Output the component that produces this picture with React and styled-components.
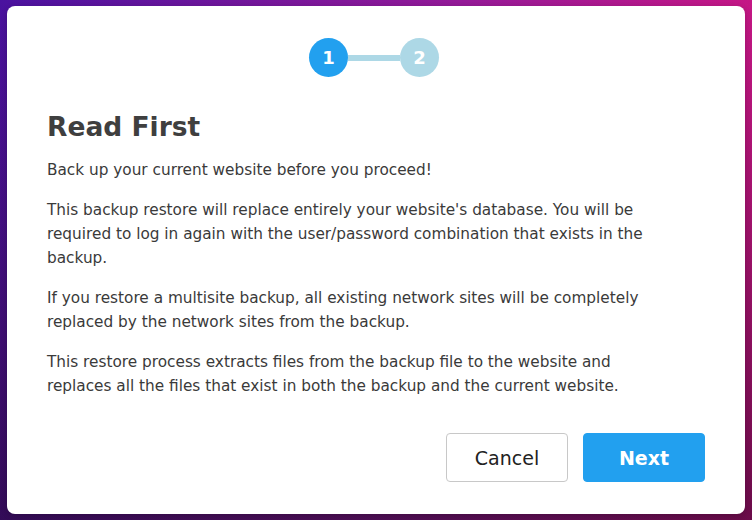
import styled, { createGlobalStyle } from 'styled-components'

const GlobalStyle = createGlobalStyle`
  html, body {
    margin: 0;
    padding: 0;
    height: 100%;
  }
  body {
    font-family: "DejaVu Sans", Verdana, sans-serif;
    background: #4a129f;
  }
  #root {
    height: 100%;
  }
`

const Backdrop = styled.div`
  width: 752px;
  height: 520px;
  box-sizing: border-box;
  padding: 6px 7px 6px 7px;
  background:
    linear-gradient(180deg, rgba(0, 0, 0, 0) 0%, rgba(20, 5, 30, 0.55) 100%),
    linear-gradient(100deg, #4a129f 0%, #951a98 55%, #d4157f 100%);
`

const Dialog = styled.div`
  height: 100%;
  box-sizing: border-box;
  background: #fff;
  border-radius: 8px;
  padding: 32px 40px 32px 40px;
  display: flex;
  flex-direction: column;
  box-shadow: 0 2px 6px rgba(0, 0, 0, 0.2);
`

const Stepper = styled.div`
  display: flex;
  align-items: center;
  justify-content: center;
  margin-left: -4px;
`

const Step = styled.div`
  width: 39px;
  height: 39px;
  border-radius: 50%;
  background: ${p => (p.active ? '#22a0ef' : '#add8e6')};
  color: #fff;
  font-weight: bold;
  font-size: 18px;
  display: flex;
  align-items: center;
  justify-content: center;
`

const Connector = styled.div`
  width: 52px;
  height: 6px;
  background: #add8e6;
`

const Title = styled.h1`
  margin: 34px 0 0;
  font-size: 26.5px;
  font-weight: bold;
  color: #3f3f3f;
`

const Body = styled.div`
  margin-top: 16px;
  max-width: 615px;
  font-size: 15.3px;
  line-height: 24px;
  color: #3a3a3a;
  display: flex;
  flex-direction: column;
  gap: 16px;
`

const Text = styled.p`
  margin: 0;
`

const Footer = styled.div`
  margin-top: auto;
  display: flex;
  justify-content: flex-end;
  gap: 15px;
`

const Button = styled.button`
  width: 122px;
  height: 49px;
  border-radius: 4px;
  font-family: "DejaVu Sans", Verdana, sans-serif;
  font-size: 19px;
  cursor: pointer;
  border: 1px solid ${p => (p.primary ? '#22a0ef' : '#c8c8c8')};
  background: ${p => (p.primary ? '#22a0ef' : '#fff')};
  color: ${p => (p.primary ? '#fff' : '#222')};
  font-weight: ${p => (p.primary ? 'bold' : 'normal')};
`

function App() {
  return (
    <Backdrop>
      <GlobalStyle />
      <Dialog>
        <Stepper>
          <Step active>1</Step>
          <Connector />
          <Step>2</Step>
        </Stepper>
        <Title>Read First</Title>
        <Body>
          <Text>Back up your current website before you proceed!</Text>
          <Text>
            This backup restore will replace entirely your website's database. You will be
            required to log in again with the user/password combination that exists in the
            backup.
          </Text>
          <Text>
            If you restore a multisite backup, all existing network sites will be completely
            replaced by the network sites from the backup.
          </Text>
          <Text>
            This restore process extracts files from the backup file to the website and
            replaces all the files that exist in both the backup and the current website.
          </Text>
        </Body>
        <Footer>
          <Button>Cancel</Button>
          <Button primary>Next</Button>
        </Footer>
      </Dialog>
    </Backdrop>
  )
}

export default App
